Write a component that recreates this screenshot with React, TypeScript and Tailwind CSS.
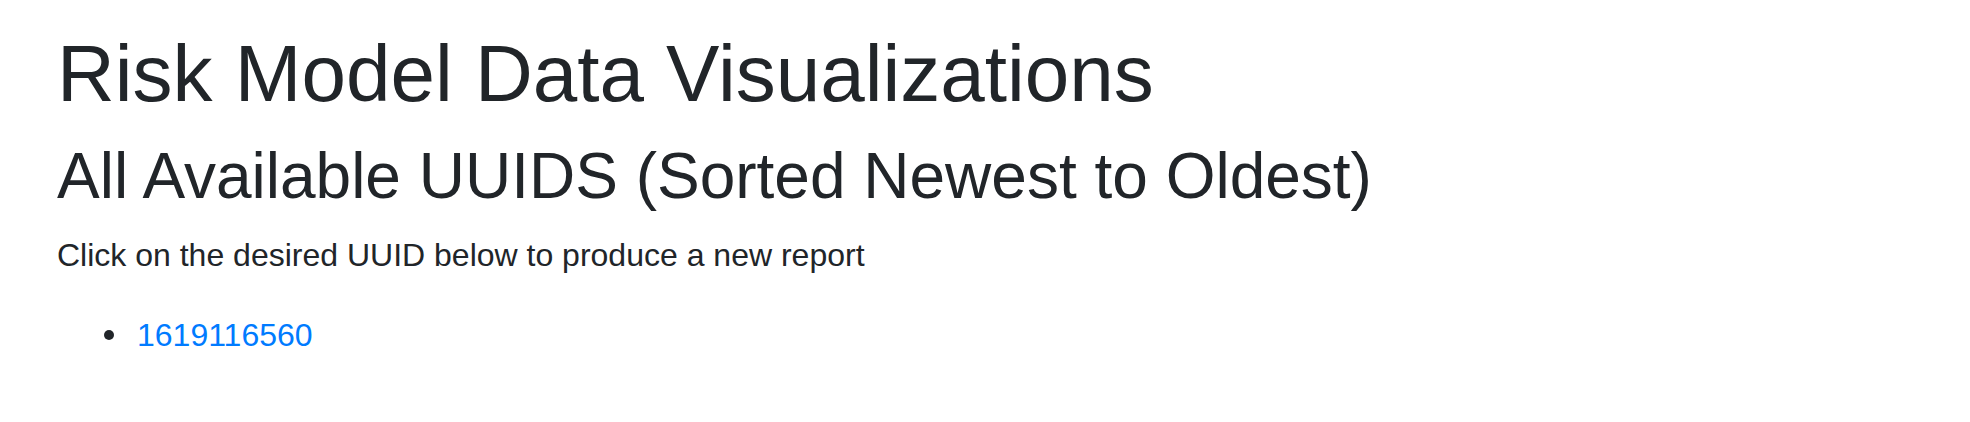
export default function App() {
  const uuids = ["1619116560"];

  return (
    <div className="min-h-[422px] bg-white pl-[57px] pt-[26px] text-[#212529] font-['Liberation_Sans',Arial,sans-serif]">
      <h1 className="mb-4 text-[80px] leading-[1.2] font-normal">
        Risk Model Data Visualizations
      </h1>
      <h2 className="mb-4 text-[64px] leading-[1.2] font-normal">
        All Available UUIDS (Sorted Newest to Oldest)
      </h2>
      <p className="mb-8 text-[32px] leading-[1.5]">
        Click on the desired UUID below to produce a new report
      </p>
      <ul className="pl-[80px] text-[32px] leading-[1.5]">
        {uuids.map((id) => (
          <li key={id} className="flex items-center">
            <span className="-ml-[33px] mr-[23px] h-[10px] w-[10px] rounded-full bg-[#212529]" />
            <a href="#" className="text-[#007bff]">
              {id}
            </a>
          </li>
        ))}
      </ul>
    </div>
  );
}
